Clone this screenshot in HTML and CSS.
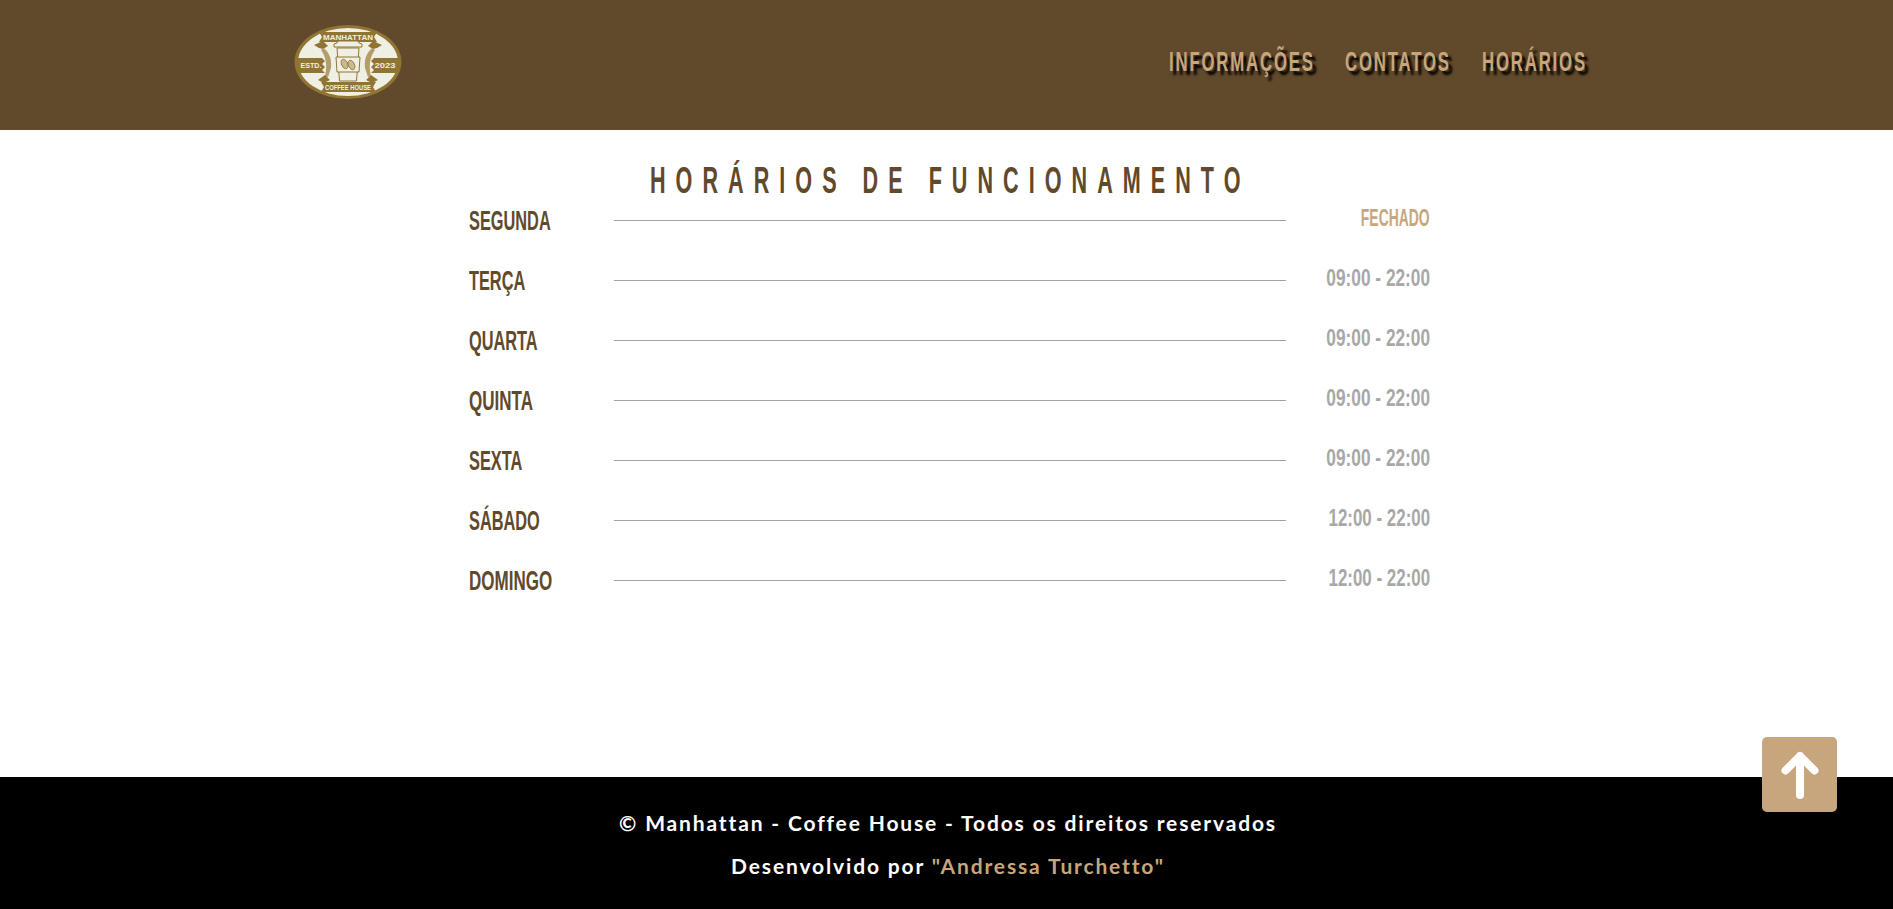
FILE: index.html
```html
<!DOCTYPE html>
<html lang="pt-br">
<head>
    <meta charset="UTF-8">
    <meta name="viewport" content="width=device-width, initial-scale=1.0">
    <title>Manhattan - Coffee House</title>
    <link rel="stylesheet" href="styles.css">
</head>
<body>

    <header class="topo">
        <svg class="logo" viewBox="0 0 108 76" width="108" height="76">
            <ellipse cx="54" cy="38" rx="53.500" ry="37" fill="#8f7434"/>
            <ellipse cx="54" cy="38" rx="50" ry="34" fill="#f0efe3"/>
            <path d="M3 34h25l3 3-3 3 3 3-3 3 3 3H3z" fill="#8f7434"/>
            <path d="M105 34H80l-3 3 3 3-3 3 3 3-3 3h28z" fill="#8f7434"/>
            <path d="M20 21l9-4 5 5-5 3-4-1zM88 21l-9-4-5 5 5 3 4-1z" fill="#8f7434"/>
            <path d="M30 24c5 5 8 10 7 20l-3 9-3-1c2-8 2-18-4-26zM78 24c-5 5-8 10-7 20l3 9 3-1c-2-8-2-18 4-26z" fill="#b39d69"/>
            <path d="M24 56l7-5 5 5-6 3zM84 56l-7-5-5 5 6 3z" fill="#8f7434"/>
            <path d="M25 8h58l-3 5 3 5H25l3-5z" fill="#8f7434"/>
            <path d="M27 58h55l-3 5 3 5H27l3-5z" fill="#8f7434"/>
            <path d="M43 24h22l-2.500 33h-17z" fill="#f0efe3" stroke="#8f7434"/>
            <path d="M40 23h28v-3l-3-1-1-2H44l-1 2-3 1z" fill="#f0efe3" stroke="#8f7434"/>
            <path d="M42 33h24l-1 15H43z" fill="#f0efe3" stroke="#8f7434"/>
            <ellipse cx="50.500" cy="40" rx="3" ry="5" fill="#c9b98f" stroke="#8f7434" stroke-width="0.800" transform="rotate(-25 50.500 40)"/>
            <ellipse cx="57.500" cy="41" rx="3" ry="5" fill="#c9b98f" stroke="#8f7434" stroke-width="0.800" transform="rotate(-25 57.500 41)"/>
            <text x="54" y="16" class="logo-txt titulo-logo" textLength="50" lengthAdjust="spacingAndGlyphs">MANHATTAN</text>
            <text x="54" y="66" class="logo-txt casa-logo" textLength="46" lengthAdjust="spacingAndGlyphs">COFFEE HOUSE</text>
            <text x="17" y="44" class="logo-txt ano-logo" textLength="21" lengthAdjust="spacingAndGlyphs">ESTD.</text>
            <text x="91" y="44" class="logo-txt ano-logo" textLength="21" lengthAdjust="spacingAndGlyphs">2023</text>
        </svg>
        <nav class="menu">
            <a href="#" class="item-info"><span>Informações</span></a>
            <a href="#" class="item-contatos"><span>Contatos</span></a>
            <a href="#" class="item-horarios"><span>Horários</span></a>
        </nav>
    </header>

    <main class="horarios">
        <h1><span>Horários de funcionamento</span></h1>
        <div class="tabela">
            <div class="linha"><span class="dia"><span>Segunda</span></span><span class="traco"></span><span class="hora fechado"><span>Fechado</span></span></div>
            <div class="linha"><span class="dia"><span>Terça</span></span><span class="traco"></span><span class="hora"><span>09:00 - 22:00</span></span></div>
            <div class="linha"><span class="dia"><span>Quarta</span></span><span class="traco"></span><span class="hora"><span>09:00 - 22:00</span></span></div>
            <div class="linha"><span class="dia larga"><span>Quinta</span></span><span class="traco"></span><span class="hora"><span>09:00 - 22:00</span></span></div>
            <div class="linha"><span class="dia"><span>Sexta</span></span><span class="traco"></span><span class="hora"><span>09:00 - 22:00</span></span></div>
            <div class="linha"><span class="dia"><span>Sábado</span></span><span class="traco"></span><span class="hora tarde"><span>12:00 - 22:00</span></span></div>
            <div class="linha"><span class="dia larga"><span>Domingo</span></span><span class="traco"></span><span class="hora tarde"><span>12:00 - 22:00</span></span></div>
        </div>
    </main>

    <footer class="rodape">
        <p>© Manhattan - Coffee House - Todos os direitos reservados</p>
        <p>Desenvolvido por <span class="autora">"Andressa Turchetto"</span></p>
    </footer>

    <a href="#" class="voltar" aria-label="Voltar ao topo">
        <svg viewBox="0 0 38 48" width="38" height="48">
            <path d="M19 44V5M4.500 19.500L19 5l14.500 14.500" fill="none" stroke="#fff" stroke-width="8" stroke-linecap="round" stroke-linejoin="round"/>
        </svg>
    </a>

</body>
</html>
```

FILE: styles.css
```css
* {
    box-sizing: border-box;
    margin: 0;
    padding: 0;
}

body {
    font-family: 'Liberation Sans', sans-serif;
    background-color: #fff;
    height: 909px;
    display: flex;
    flex-direction: column;
    overflow: hidden;
}

/* sem Oswald aqui: as fontes estreitas sao feitas com scaleX nos spans */
.menu span, h1 span, .dia span, .hora span {
    display: inline-block;
    white-space: nowrap;
    font-weight: bold;
}

.topo {
    height: 130px;
    flex-shrink: 0;
    background-color: #61492b;
    display: flex;
    justify-content: space-between;
    align-items: center;
    padding: 0 306px 6px 294px;
}

.logo-txt {
    font-weight: bold;
    fill: #f0efe3;
    text-anchor: middle;
}

.titulo-logo {
    font-size: 8px;
}

.casa-logo {
    font-size: 6.500px;
}

.ano-logo {
    font-size: 7px;
}

.menu {
    display: flex;
    gap: 32px;
}

.menu a {
    display: block;
    color: #c7a67d;
    text-decoration: none;
    text-transform: uppercase;
    font-size: 28px;
    line-height: 34px;
    letter-spacing: 3px;
    text-shadow: 6px 4px 3px #000;
}

.menu span {
    transform: scaleX(0.6);
    transform-origin: left center;
}

.item-info {
    width: 144px;
}

.item-contatos {
    width: 105px;
}

.item-horarios {
    width: 105px;
}

.horarios {
    flex: 1;
    display: flex;
    flex-direction: column;
    align-items: center;
    padding-top: 31px;
}

.horarios h1 {
    color: #61492b;
    font-size: 36px;
    line-height: 40px;
    letter-spacing: 16.700px;
    text-transform: uppercase;
    width: 593px;
    margin-left: -1px;
}

.horarios h1 span {
    transform: scaleX(0.6);
    transform-origin: left center;
}

.tabela {
    width: 961px;
    margin-left: 6px;
}

.linha {
    height: 60px;
    display: flex;
    align-items: flex-start;
}

.dia {
    width: 145px;
    margin-top: 4px;
    color: #61492b;
    font-size: 27px;
    line-height: 32px;
    text-transform: uppercase;
}

.dia span {
    transform: scaleX(0.605);
    transform-origin: left center;
}

.dia.larga span {
    transform: scaleX(0.63);
}

.traco {
    width: 672px;
    height: 1px;
    margin-top: 19px;
    background-color: #a3a3a3;
}

.hora {
    flex: 1;
    margin-top: 3px;
    text-align: right;
    color: #a8a8a8;
    font-size: 24px;
    line-height: 28px;
}

.hora span {
    transform: scaleX(0.72);
    transform-origin: right center;
}

.hora.tarde span {
    transform: scaleX(0.705);
}

.hora.fechado {
    color: #c7a67d;
    text-transform: uppercase;
}

.hora.fechado span {
    transform: scaleX(0.58);
}

.rodape {
    height: 132px;
    flex-shrink: 0;
    background-color: #000;
    color: #fff;
    font-family: Lato, sans-serif;
    font-size: 21px;
    font-weight: bold;
    letter-spacing: 1.850px;
    text-align: center;
    padding: 33px 0 0 3px;
}

.rodape p {
    line-height: 25px;
    margin-bottom: 18px;
}

.autora {
    color: #c7a67d;
}

.voltar {
    position: fixed;
    left: 1762px;
    top: 737px;
    width: 75px;
    height: 75px;
    border-radius: 5px;
    background-color: #c7a67d;
    display: flex;
    justify-content: center;
    align-items: center;
}
```
